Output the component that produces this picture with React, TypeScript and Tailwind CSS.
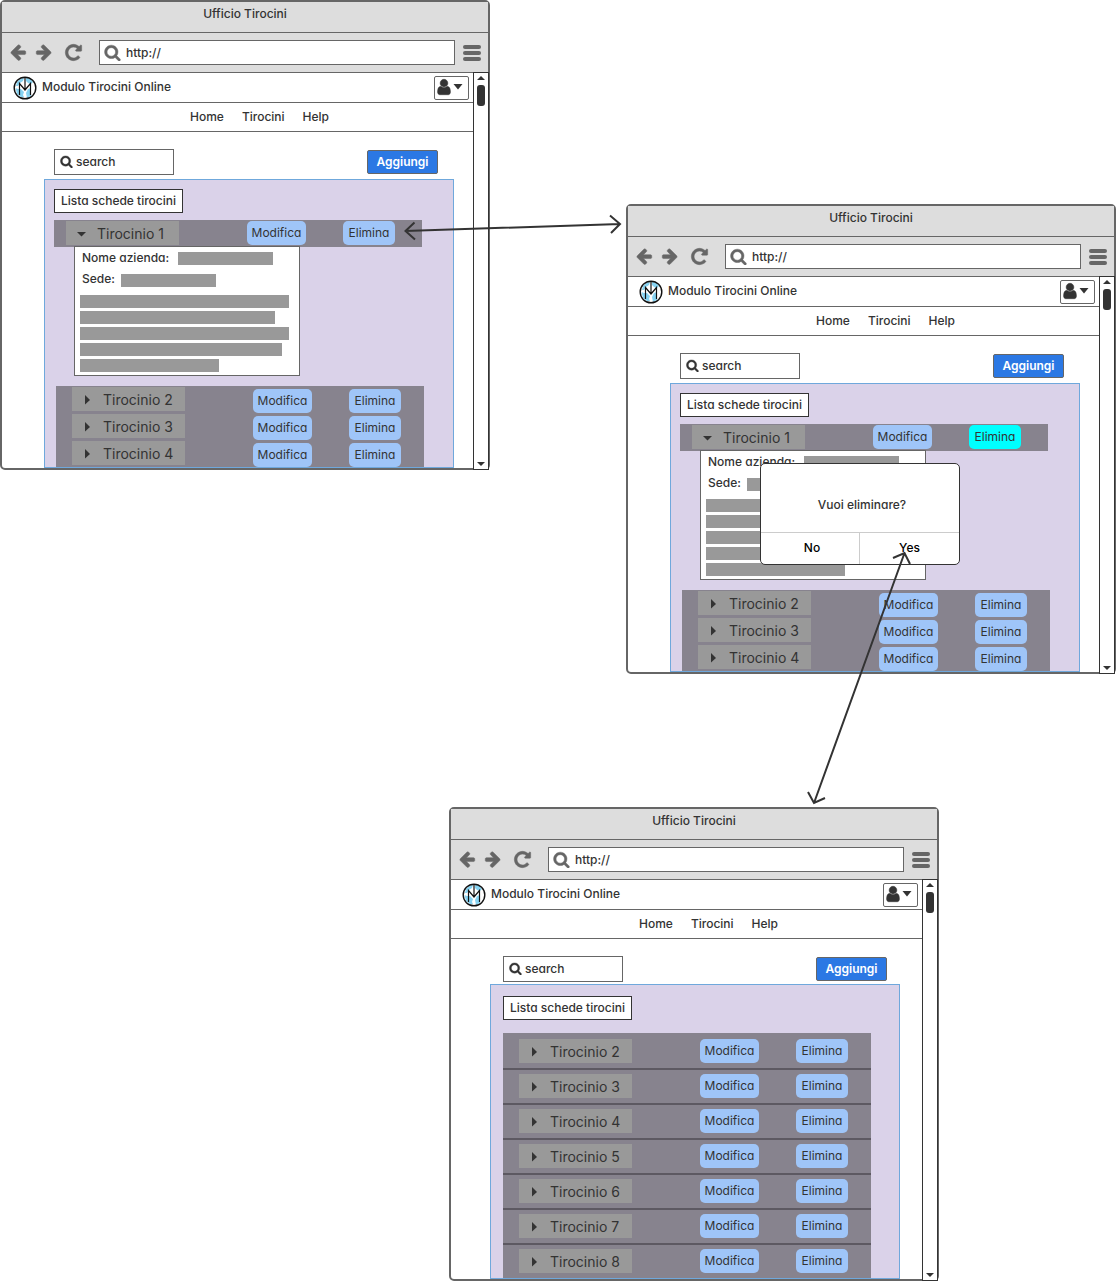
import type { ReactNode } from "react";

type IconProps = { d: string; className?: string };

const ICONS = {
  arrow:
    "M1664 896v128q0 53-32.5 90.500t-84.500 37.500h-704l293 294q38 36 38 90t-38 90l-75 76q-37 37-90 37-52 0-91-37l-651-652q-37-37-37-90 0-52 37-91l651-650q38-38 91-38 52 0 90 38l75 74q38 38 38 91t-38 91l-293 293h704q52 0 84.500 37.500t32.500 90.500z",
  reload:
    "M1664 256v448q0 26-19 45t-45 19h-448q-42 0-59-40-17-39 14-69l138-138q-148-137-349-137-104 0-198.500 40.500t-163.500 109.500-109.500 163.500-40.500 198.500 40.500 198.500 109.500 163.500 163.500 109.500 198.500 40.500q119 0 225-52t179-147q7-10 23-12 15 0 25 9l137 138q9 8 9.500 20.500t-7.500 22.500q-109 132-264 204.500t-327 72.500q-156 0-298-61t-245-164-164-245-61-298 61-298 164-245 245-164 298-61q147 0 284.500 55.500t244.500 156.500l130-129q29-31 70-14 39 17 39 59z",
  search:
    "M1216 832q0-185-131.500-316.500t-316.500-131.500-316.500 131.500-131.500 316.500 131.500 316.500 316.500 131.500 316.500-131.500 131.500-316.500zm512 832q0 52-38 90t-90 38q-54 0-90-38l-343-342q-179 124-399 124-143 0-273.500-55.500t-225-150-150-225-55.500-273.500 55.500-273.500 150-225 225-150 273.500-55.500 273.500 55.500 225 150 150 225 55.500 273.500q0 220-124 399l343 343q37 37 37 90z",
  user:
    "M1536 1399q0 109-62.500 187t-150.500 78h-854q-88 0-150.500-78t-62.500-187q0-85 8.500-160.500t31.500-152 58.500-131 94-89 134.500-34.500q131 128 313 128t313-128q76 0 134.500 34.500t94 89 58.500 131 31.500 152 8.500 160.500zm-256-887q0 159-112.500 271.500t-271.500 112.500-271.500-112.500-112.500-271.500 112.500-271.500 271.500-112.500 271.500 112.500 112.500 271.500z",
};

function Icon({ d, className }: IconProps) {
  return (
    <svg
      viewBox="0 0 1792 1792"
      fill="currentColor"
      stroke="currentColor"
      strokeWidth="50"
      aria-hidden="true"
      className={className}
    >
      <path d={d} />
    </svg>
  );
}

function Logo() {
  return (
    <svg viewBox="0 0 24 24" aria-hidden="true" className="size-6 shrink-0">
      <circle cx="12" cy="12" r="10.8" fill="#fff" />
      <path
        d="M4 6 8 2.500 11 2 10 5 7 7 5 10 3 10zM13 2 17 2.500 20 6 18 8 15 7 13 5zM2.500 12 5 13 8 13 11 16 10 19 11 21 8 21 4 18zM15 13 18 12 18 20 14 22 13 17z"
        fill="#87d3f2"
      />
      <circle cx="12" cy="12" r="10.8" fill="none" stroke="#111" strokeWidth="1.4" />
      <path d="M6.500 19V7.500L12 14l5.500-6.500V19M12 1.500V14" fill="none" stroke="#111" strokeWidth="1.2" />
    </svg>
  );
}

function Action({ label, active = false }: { label: string; active?: boolean }) {
  return (
    <button
      type="button"
      className={`h-6 rounded-[5px] text-center leading-5 ${label === "Modifica" ? "w-[59px]" : "w-[52px]"} ${
        active ? "bg-[#00ffff]" : "bg-[#9fc5f8]"
      }`}
    >
      {label}
    </button>
  );
}

function RowItems({ n, open = false, active = false }: { n: number; open?: boolean; active?: boolean }) {
  return (
    <>
      <button
        type="button"
        aria-expanded={open}
        className="mr-[68px] flex h-6 w-[113px] items-center bg-[#999] pt-0.5 pl-[9px] text-sm leading-5"
      >
        <svg viewBox="0 0 12 12" fill="currentColor" aria-hidden="true" className="mr-[10px] size-3">
          <path d={open ? "M2 4h9L6.500 8.500z" : "M4 1v9.500L9 6z"} />
        </svg>
        Tirocinio {n}
      </button>
      <Action label="Modifica" />
      <div className="w-[37px]" />
      <Action label="Elimina" active={active} />
    </>
  );
}

function Bar({ className }: { className: string }) {
  return <div className={`h-[13px] bg-[#999] ${className}`} />;
}

function OpenList({ active = false }: { active?: boolean }) {
  return (
    <>
      <div className="mt-[7px] ml-[9px] flex h-[27px] w-[368px] items-start bg-[#87838e] pt-px pl-3">
        <RowItems n={1} open active={active} />
      </div>
      <div className="-mt-px ml-[29px] h-[130px] w-[226px] border border-[#666] bg-white px-[5px]">
        <div className="flex h-[21px] items-center gap-[9px] pl-0.5 font-medium">
          Nome azienda:
          <Bar className="mt-0.5 w-[95px]" />
        </div>
        <div className="flex h-[21px] items-center gap-[6px] pl-0.5 font-medium">
          Sede:
          <Bar className="mt-1 w-[95px]" />
        </div>
        <div className="flex flex-col gap-[3px] pt-[6px]">
          <Bar className="w-[209px]" />
          <Bar className="w-[195px]" />
          <Bar className="w-[209px]" />
          <Bar className="w-[202px]" />
          <Bar className="w-[139px]" />
        </div>
      </div>
      <ul className="mt-[10px] ml-[11px] w-[368px] bg-[#87838e] pt-px">
        {[2, 3, 4].map((n) => (
          <li
            key={n}
            className="flex h-[27px] items-start pl-4 last:h-[26px] [&>button:not(:first-child)]:mt-0.5"
          >
            <RowItems n={n} />
          </li>
        ))}
      </ul>
    </>
  );
}

function ClosedList() {
  return (
    <ul className="mt-[13px] ml-3 w-[368px] bg-[#87838e]">
      {[2, 3, 4, 5, 6, 7, 8].map((n) => (
        <li
          key={n}
          className="flex h-[35px] items-start border-[#5d5962] pt-[6px] pl-4 not-first:border-t-2 not-first:pt-1"
        >
          <RowItems n={n} />
        </li>
      ))}
    </ul>
  );
}

function BrowserWindow({
  id,
  place,
  panel,
  children,
}: {
  id: string;
  place: string;
  panel: string;
  children: ReactNode;
}) {
  return (
    <section
      className={`absolute flex w-[490px] flex-col rounded-[5px] border-2 border-[#666] bg-white ${place}`}
    >
      <h2 className="h-[31px] border-b border-[#666] bg-[#ddd] pt-0.5 text-center leading-5 font-medium">
        Ufficio Tirocini
      </h2>
      <div className="flex h-10 items-center gap-2 border-b border-[#666] bg-[#ddd] pr-[7px] pl-[7px] text-[#666]">
        <button type="button" aria-label="Indietro">
          <Icon d={ICONS.arrow} className="mb-px size-[18px]" />
        </button>
        <button type="button" aria-label="Avanti">
          <Icon d={ICONS.arrow} className="mb-px size-[18px] -scale-x-100" />
        </button>
        <button type="button" aria-label="Ricarica" className="ml-[3px]">
          <Icon d={ICONS.reload} className="size-[19px]" />
        </button>
        <label
          htmlFor={`url-${id}`}
          className="ml-2 flex h-[25px] flex-1 items-center border border-[#666] bg-white pl-1"
        >
          <Icon d={ICONS.search} className="mb-px size-[17px] shrink-0" />
          <input
            id={`url-${id}`}
            aria-label="Indirizzo"
            defaultValue="http://"
            className="ml-[5px] h-5 w-full min-w-0 pt-px leading-5 font-medium text-[#333] outline-none"
          />
        </label>
        <button type="button" aria-label="Menu" className="flex w-[18px] flex-col gap-0.5">
          <span className="h-1 rounded-full bg-[#666]" />
          <span className="h-1 rounded-full bg-[#666]" />
          <span className="h-1 rounded-full bg-[#666]" />
        </button>
      </div>
      <div className="flex flex-1">
        <div className="flex flex-1 flex-col">
          <header className="flex h-[30px] items-center border-b border-[#666] pr-1 pl-[11px]">
            <Logo />
            <h1 className="flex-1 pb-0.5 pl-[5px] leading-5 font-medium">Modulo Tirocini Online</h1>
            <button
              type="button"
              aria-label="Utente"
              className="flex h-6 w-[35px] items-center rounded-xs border border-[#666] pb-px"
            >
              <Icon d={ICONS.user} className="size-[18px]" />
              <svg viewBox="0 0 10 6" fill="currentColor" aria-hidden="true" className="h-[6px] w-[10px]">
                <path d="M.5 0h9L5 5.500z" />
              </svg>
            </button>
          </header>
          <nav className="flex h-[29px] items-center gap-[18px] border-b border-[#666] pl-[188px] font-medium">
            <a href="#home">Home</a>
            <a href="#tirocini">Tirocini</a>
            <a href="#help">Help</a>
          </nav>
          <div className="flex items-center justify-between pt-[17px] pr-[35px] pl-[52px]">
            <label
              htmlFor={`search-${id}`}
              className="flex h-[26px] w-[120px] items-center gap-[3px] border border-[#666] pl-[5px]"
            >
              <Icon d={ICONS.search} className="mb-px size-[13px] shrink-0" />
              <input
                id={`search-${id}`}
                aria-label="Cerca"
                placeholder="search"
                className="h-5 w-full min-w-0 leading-5 font-medium outline-none placeholder:text-[#333] placeholder:opacity-100"
              />
            </label>
            <button
              type="button"
              className="h-6 w-[71px] rounded-xs border border-[#666] bg-[#2b78e4] font-semibold text-white"
            >
              Aggiungi
            </button>
          </div>
          <div className={`flex w-[410px] flex-1 flex-col border border-[#6fa8dc] bg-[#dad2e9] ${panel}`}>
            {children}
          </div>
        </div>
        <div className="-mt-px -mr-px -mb-0.5 flex w-4 flex-col items-center border border-[#333] bg-white">
          <svg viewBox="0 0 8 4" fill="#333" aria-hidden="true" className="mt-[3px] h-1 w-2">
            <path d="M0 4h8L4 0z" />
          </svg>
          <div className="mt-[5px] h-[21px] w-2 rounded-[3px] bg-[#333]" />
          <div className="flex-1" />
          <svg viewBox="0 0 8 4" fill="#333" aria-hidden="true" className="mb-[3px] h-1 w-2">
            <path d="M0 0h8L4 4z" />
          </svg>
        </div>
      </div>
    </section>
  );
}

function ListLabel({ className }: { className: string }) {
  return (
    <h3
      className={`h-6 w-[129px] shrink-0 border border-[#333] bg-white text-center leading-[21px] font-medium whitespace-nowrap ${className}`}
    >
      Lista schede tirocini
    </h3>
  );
}

export default function App() {
  return (
    <main className="relative min-h-[1281px] overflow-x-auto bg-white font-['Inter','Noto_Sans',sans-serif] text-xs text-[#333] [font-feature-settings:'cv11']">
      <BrowserWindow id="list" place="top-0 left-0 min-h-[470px]" panel="ml-[42px] mt-1">
        <ListLabel className="mt-[9px] ml-[9px]" />
        <OpenList />
      </BrowserWindow>

      <BrowserWindow id="confirm" place="top-[204px] left-[626px] min-h-[470px]" panel="ml-[42px] mt-1">
        <ListLabel className="mt-[9px] ml-[9px]" />
        <OpenList active />
      </BrowserWindow>

      <div
        role="dialog"
        aria-label="Vuoi eliminare?"
        className="absolute top-[463px] left-[760px] flex h-[102px] w-[200px] flex-col rounded-[5px] border border-[#333] bg-white"
      >
        <p className="flex flex-1 items-center justify-center pt-[14px] pl-1 font-medium">Vuoi eliminare?</p>
        <div className="grid h-8 grid-cols-2 border-t border-[#ccc] font-medium text-black">
          <button type="button" className="border-r border-[#ccc] pb-0.5 pl-1">
            No
          </button>
          <button type="button" className="pb-0.5">
            Yes
          </button>
        </div>
      </div>

      <BrowserWindow id="result" place="top-[807px] left-[449px] min-h-[474px]" panel="ml-[39px] mt-0.5">
        <ListLabel className="mt-[11px] ml-3" />
        <ClosedList />
      </BrowserWindow>

      <svg
        viewBox="0 0 1116 1281"
        fill="none"
        stroke="#333"
        strokeWidth="2"
        aria-hidden="true"
        className="pointer-events-none absolute top-0 left-0 h-[1281px] w-[1116px]"
      >
        <path d="M405 231 620 224M414.500 222.500 405.500 231 415 239.500M610 215.500 620 224 611 233" />
        <path d="M904.500 553 814 803M893 558 904.500 553 910 564M808 792 814 803 825 798" />
      </svg>
    </main>
  );
}
